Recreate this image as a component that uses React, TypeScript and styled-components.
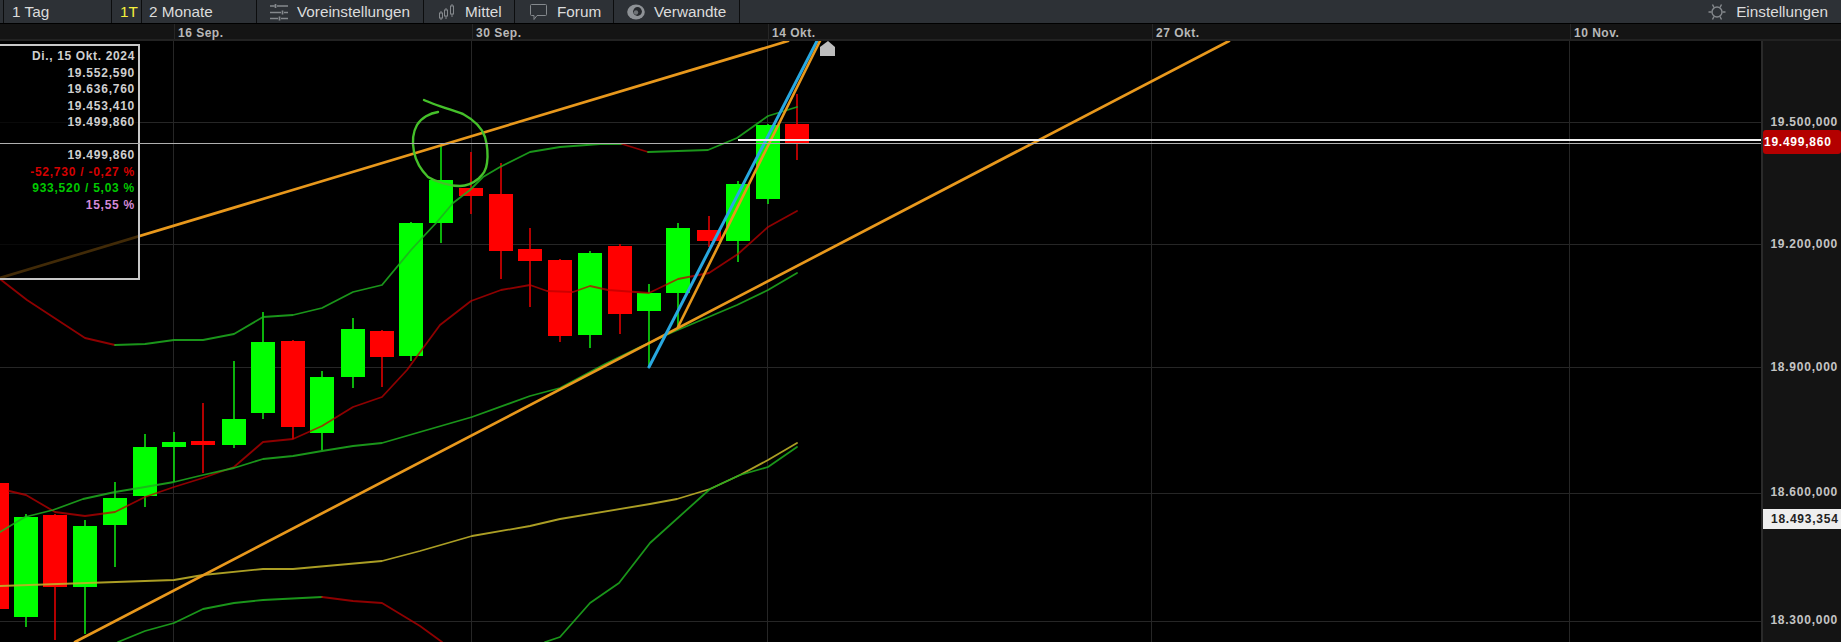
import React from "react";
import styled, { createGlobalStyle } from "styled-components";

const Global = createGlobalStyle`
  html, body { margin: 0; padding: 0; background: #000; overflow: hidden; }
  body { font-family: "Liberation Sans", Arial, sans-serif; }
`;

const Page = styled.div`
  width: 1841px;
  height: 642px;
  display: flex;
  flex-direction: column;
  overflow: hidden;
`;

const Toolbar = styled.div`
  height: 24px;
  flex: none;
  display: flex;
  background: #2d3136;
  border-bottom: 1px solid #000;
  box-sizing: border-box;
  color: #dcdcdc;
  font-size: 15.3px;
`;

const ToolItem = styled.div<{ $w: number; $pl: number; $accent?: boolean }>`
  width: ${(p) => p.$w}px;
  flex: none;
  box-sizing: border-box;
  padding-left: ${(p) => p.$pl}px;
  display: flex;
  align-items: center;
  gap: 9px;
  border-right: 1px solid #0c0d0e;
  color: ${(p) => (p.$accent ? "#f5f03c" : "#dcdcdc")};
  white-space: nowrap;
`;

const ToolSpacer = styled.div`
  flex: 1;
`;

const ToolRight = styled.div`
  display: flex;
  align-items: center;
  gap: 10px;
  padding-right: 13px;
`;

const ToolIcon = styled.svg`
  width: 18px;
  height: 18px;
  flex: none;
  fill: none;
  stroke: #85898d;
  stroke-width: 1.3;
`;

const TimeAxis = styled.div`
  height: 17px;
  flex: none;
  display: flex;
  background: #141414;
  border-bottom: 2px solid #222;
  box-sizing: border-box;
`;

const TimeCell = styled.div<{ $w: number; $line?: boolean }>`
  width: ${(p) => p.$w}px;
  flex: none;
  box-sizing: border-box;
  padding-left: 3px;
  border-left: ${(p) => (p.$line ? "1px solid #262626" : "none")};
  color: #b8b8b8;
  font-size: 12px;
  font-weight: 700;
  letter-spacing: 0.5px;
  line-height: 18px;
  white-space: nowrap;
`;

const ChartRow = styled.div`
  flex: 1;
  display: flex;
  min-height: 0;
`;

const Plot = styled.div`
  position: relative;
  width: 1761px;
  flex: none;
  background: #000;
`;

const ChartSvg = styled.svg`
  display: block;
  width: 1761px;
  height: 601px;
`;

const GridLine = styled.line`
  stroke: #262626;
  stroke-width: 1;
`;

const Wick = styled.line<{ $up: boolean }>`
  stroke: ${(p) => (p.$up ? "#0fe00f" : "#e00000")};
  stroke-width: 1.6;
`;

const Body = styled.rect<{ $up: boolean }>`
  fill: ${(p) => (p.$up ? "#00ff00" : "#ff0000")};
`;

const Indicator = styled.polyline<{ $c: string; $w?: number }>`
  fill: none;
  stroke: ${(p) => p.$c};
  stroke-width: ${(p) => p.$w ?? 1.8};
  stroke-linejoin: round;
  stroke-linecap: round;
`;

const InfoBox = styled.div`
  position: absolute;
  left: -2px;
  top: 3px;
  width: 142px;
  height: 236px;
  box-sizing: border-box;
  border: 2px solid #c8c8c8;
  background: rgba(0, 0, 0, 0.72);
  padding: 2px 3px 0 0;
  display: flex;
  flex-direction: column;
  align-items: flex-end;
`;

const InfoRow = styled.div<{ $c?: string }>`
  height: 16.5px;
  line-height: 16.5px;
  font-size: 12px;
  font-weight: 700;
  letter-spacing: 0.75px;
  color: ${(p) => p.$c ?? "#cfcfcf"};
  white-space: nowrap;
`;

const DateRow = styled(InfoRow)`
  letter-spacing: 0.65px;
`;

const GreyPriceLine = styled.div`
  position: absolute;
  left: 0;
  right: 0;
  top: 102px;
  height: 1px;
  background: #b0b0b0;
`;

const LastPriceLine = styled.div`
  position: absolute;
  left: 738px;
  right: 0;
  top: 98px;
  height: 2px;
  background: #f2f2f2;
`;

const PriceAxis = styled.div`
  position: relative;
  flex: 1;
  background: #141414;
  border-left: 2px solid #2a2a2a;
  display: flex;
  flex-direction: column;
  align-items: flex-end;
  padding-right: 3px;
`;

const PriceLabel = styled.div<{ $gap: number }>`
  margin-top: ${(p) => p.$gap}px;
  height: 20px;
  line-height: 20px;
  color: #c4c4c4;
  font-size: 12px;
  font-weight: 700;
  letter-spacing: 0.75px;
`;

const PriceTag = styled.div<{ $bg: string; $c: string; $top: number; $h: number; $pl: number; $r: number }>`
  position: absolute;
  left: 0;
  right: 0;
  top: ${(p) => p.$top}px;
  height: ${(p) => p.$h}px;
  line-height: ${(p) => p.$h}px;
  background: ${(p) => p.$bg};
  color: ${(p) => p.$c};
  border-radius: ${(p) => p.$r}px;
  padding-left: ${(p) => p.$pl}px;
  font-size: 12px;
  font-weight: 700;
  letter-spacing: 0.75px;
`;

type C = [number, number, number, number, number, boolean];
// x, wick top, body top, body bottom, wick bottom, rising
const candles: C[] = [
  [-3, 483, 483, 609, 609, false],
  [26, 514, 517, 617, 627, true],
  [55, 514, 515, 587, 640, false],
  [85, 520, 526, 587, 634, true],
  [115, 482, 498, 525, 567, true],
  [145, 434, 447, 496, 507, true],
  [174, 432, 442, 447, 482, true],
  [203, 403, 441, 445, 473, false],
  [234, 361, 419, 445, 448, true],
  [263, 312, 342, 413, 419, true],
  [293, 340, 341, 427, 439, false],
  [322, 371, 377, 433, 450, true],
  [353, 318, 329, 377, 388, true],
  [382, 330, 331, 357, 387, false],
  [411, 222, 223, 356, 361, true],
  [441, 145, 180, 223, 243, true],
  [471, 152, 188, 196, 214, false],
  [501, 163, 194, 251, 279, false],
  [530, 228, 249, 261, 307, false],
  [560, 259, 260, 336, 342, false],
  [590, 251, 253, 335, 348, true],
  [620, 244, 246, 314, 334, false],
  [649, 284, 293, 311, 367, true],
  [678, 223, 228, 293, 327, true],
  [709, 216, 230, 241, 247, false],
  [738, 181, 184, 241, 262, true],
  [768, 124, 125, 199, 204, true],
  [797, 94, 124, 143, 160, false],
];

const GREEN = "rgba(30,175,30,0.85)";
const RED = "rgba(190,0,0,0.75)";
const YELLOW = "rgba(190,175,40,0.9)";

const series: { c: string; p: string }[] = [
  { c: RED, p: "0,279 27,300 85,338 115,345" },
  { c: GREEN, p: "115,345 145,344 174,340 203,340 234,334 263,317 293,315 322,308 353,292 382,285 411,250 423,237 437,222 453,203 470,190 483,177 500,167 530,152 560,147 600,144 622,144" },
  { c: RED, p: "622,144 648,152" },
  { c: GREEN, p: "648,152 708,150 737,138 768,116 797,107" },
  { c: RED, p: "9,491 26,495 55,512 85,516 115,512 145,497 174,487 203,478 234,467 263,442 293,439 322,426 353,407 382,397 407,370 440,325 471,301 501,290 530,285 547,291 573,292 590,286 608,290 649,293 678,279 709,273 738,254 768,227 797,211" },
  { c: GREEN, p: "0,532 25,517 53,510 83,499 115,492 145,487 174,482 203,475 234,468 263,459 293,456 322,451 353,446 382,443 420,432 472,417 530,396 560,388 590,372 605,364 640,347 673,332 737,305 768,290 797,273" },
  { c: YELLOW, p: "0,586 174,580 203,575 263,569 293,569 382,561 420,551 472,536 530,526 560,519 650,504 677,499 710,489 740,475 768,460 797,443" },
  { c: GREEN, p: "118,642 145,631 174,623 203,609 234,603 263,600 322,597" },
  { c: RED, p: "322,597 353,601 382,603 420,626 442,642" },
  { c: GREEN, p: "545,642 560,637 590,603 619,583 650,543 710,489 740,475 768,467 797,447" },
];

const trend: { c: string; p: string; w: number }[] = [
  { c: "#e8981c", p: "0,278 788,41", w: 2.7 },
  { c: "#e8981c", p: "75,642 1229,41", w: 2.7 },
  { c: "#28a8e0", p: "649,367 817,41", w: 3 },
  { c: "#e8981c", p: "678,327 820,41", w: 2.6 },
];

const hGrid = [122, 244, 367, 493, 621];
const vGrid = [173.5, 471.5, 767.5, 1151.5, 1569.5];

const timeCells = [
  { w: 174, t: "" },
  { w: 298, t: "16 Sep.", line: true },
  { w: 296, t: "30 Sep.", line: true },
  { w: 384, t: "14 Okt.", line: true },
  { w: 418, t: "27 Okt.", line: true },
  { w: 271, t: "10 Nov.", line: true },
];

const info: { t: string; c?: string; date?: boolean }[] = [
  { t: "Di., 15 Okt. 2024", date: true },
  { t: "19.552,590" },
  { t: "19.636,760" },
  { t: "19.453,410" },
  { t: "19.499,860" },
  { t: "\u00a0" },
  { t: "19.499,860" },
  { t: "-52,730 / -0,27 %", c: "#d40000" },
  { t: "933,520 / 5,03 %", c: "#00c800" },
  { t: "15,55 %", c: "#d48ad8" },
];

const prices = [
  { t: "19.500,000", gap: 71 },
  { t: "19.200,000", gap: 102 },
  { t: "18.900,000", gap: 103 },
  { t: "18.600,000", gap: 105 },
  { t: "18.300,000", gap: 108 },
];

const SlidersIcon = () => (
  <ToolIcon viewBox="0 0 18 18" style={{ strokeWidth: 1.7 }}>
    <path d="M0 3h4.5M7 3h11M5.5 1v4M0 9.5h11M14 9.5h4M12.5 7.5v4M0 15.5h8M11 15.5h7M9.5 13.5v4" />
  </ToolIcon>
);

const CandleIcon = () => (
  <ToolIcon viewBox="0 0 18 18" style={{ strokeWidth: 1 }}>
    <path d="M3 8v2M3 15v2M8 5v2M8 13v3M14 1v2M14 11v3" />
    <rect x="1.5" y="10" width="3" height="5" />
    <rect x="6.5" y="7" width="3" height="6" />
    <rect x="12.5" y="3" width="3" height="8" />
  </ToolIcon>
);

const BubbleIcon = () => (
  <ToolIcon viewBox="0 0 18 18" style={{ width: 19, strokeWidth: 1 }}>
    <path d="M2 1.5h14a1 1 0 0 1 1 1v9a1 1 0 0 1-1 1H7.5L4.5 16.5v-4H2a1 1 0 0 1-1-1v-9a1 1 0 0 1 1-1z" />
  </ToolIcon>
);

const EyeIcon = () => (
  <ToolIcon viewBox="0 0 18 18" style={{ strokeWidth: 0 }}>
    <ellipse cx="9" cy="9" rx="8.8" ry="7.6" fill="#8e9296" />
    <circle cx="10.5" cy="8.5" r="4.4" fill="#26292d" />
    <circle cx="9" cy="9.5" r="2.2" fill="#6f7377" />
  </ToolIcon>
);

const GearIcon = () => (
  <ToolIcon viewBox="0 0 18 18" style={{ strokeWidth: 1.4 }}>
    <circle cx="9" cy="9" r="5" />
    <path d="M0.5 9h3M14.5 9h3M4.5 1.5l1.5 3M13.5 1.5l-1.5 3M4.5 16.5l1.5-3M13.5 16.5l-1.5-3" />
  </ToolIcon>
);

export default function App() {
  return (
    <Page>
      <Global />
      <Toolbar>
        <ToolItem $w={4} $pl={0} />
        <ToolItem $w={108} $pl={8}>1 Tag</ToolItem>
        <ToolItem $w={30} $pl={8} $accent>1T</ToolItem>
        <ToolItem $w={115} $pl={7}>2 Monate</ToolItem>
        <ToolItem $w={167} $pl={13}><SlidersIcon />Voreinstellungen</ToolItem>
        <ToolItem $w={91} $pl={14}><CandleIcon />Mittel</ToolItem>
        <ToolItem $w={99} $pl={14}><BubbleIcon />Forum</ToolItem>
        <ToolItem $w={126} $pl={13}><EyeIcon />Verwandte</ToolItem>
        <ToolSpacer />
        <ToolRight><GearIcon />Einstellungen</ToolRight>
      </Toolbar>
      <TimeAxis>
        {timeCells.map((c, i) => (
          <TimeCell key={i} $w={c.w} $line={c.line}>{c.t}</TimeCell>
        ))}
      </TimeAxis>
      <ChartRow>
        <Plot>
          <ChartSvg viewBox="0 41 1761 601">
            {hGrid.map((y) => <GridLine key={y} x1={0} x2={1761} y1={y + 0.5} y2={y + 0.5} />)}
            {vGrid.map((x) => <GridLine key={x} x1={x} x2={x} y1={41} y2={642} />)}
            {candles.map(([x, wt, bt, bb, wb, up]) => (
              <g key={x}>
                <Wick $up={up} x1={x} x2={x} y1={wt} y2={wb} />
                <Body $up={up} x={x - 12} y={bt} width={24} height={bb - bt} />
              </g>
            ))}
            {series.map((s, i) => <Indicator key={i} $c={s.c} points={s.p} />)}
            {trend.map((s, i) => <Indicator key={i} $c={s.c} $w={s.w} points={s.p} />)}
            <path
              d="M424 100 C432 104 452 110 463 114 C474 120 482 128 485 137 C488 148 488 156 487 163 C486 172 482 175 478 179 C472 184 466 186 460 186 C450 186 436 182 428 177 C421 170 416 162 414 152 C412 142 413 132 417 125 C421 118 430 113 438 112"
              fill="none"
              stroke="#45c02a"
              strokeWidth={2.4}
              strokeLinecap="round"
            />
            <path d="M820 56 V47 L828 41 L835 47 V56 Z" fill="#bdbdbd" />
          </ChartSvg>
          <InfoBox>
            {info.map((r, i) =>
              r.date ? <DateRow key={i}>{r.t}</DateRow> : <InfoRow key={i} $c={r.c}>{r.t}</InfoRow>
            )}
          </InfoBox>
          <GreyPriceLine />
          <LastPriceLine />
        </Plot>
        <PriceAxis>
          {prices.map((p) => <PriceLabel key={p.t} $gap={p.gap}>{p.t}</PriceLabel>)}
          <PriceTag $bg="#b40000" $c="#ffffff" $top={89} $h={24} $pl={1} $r={3}>19.499,860</PriceTag>
          <PriceTag $bg="#eeeeee" $c="#222222" $top={468} $h={20} $pl={8} $r={0}>18.493,354</PriceTag>
        </PriceAxis>
      </ChartRow>
    </Page>
  );
}
